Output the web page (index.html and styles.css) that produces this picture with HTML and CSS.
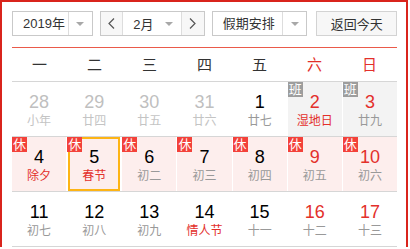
FILE: index.html
```html
<!DOCTYPE html>
<html lang="zh-CN">
<head>
    <meta charset="UTF-8">
    <title>万年历</title>
    <link rel="stylesheet" href="styles.css">
</head>
<body>

    <div class="calendar">
        <!-- 顶部控制栏 -->
        <div class="toolbar">
            <div class="select select-year">
                <span class="select-text">2019年</span>
                <span class="select-arrow"><i class="caret"></i></span>
            </div>

            <div class="month-group">
                <span class="nav-btn">
                    <svg width="7" height="11" viewBox="0 0 7 11"><polyline points="6,0.5 1,5.5 6,10.5" fill="none" stroke="#555" stroke-width="1.2"/></svg>
                </span>
                <span class="month-select">
                    <span class="month-text">2月</span>
                    <i class="caret"></i>
                </span>
                <span class="nav-btn nav-next">
                    <svg width="7" height="11" viewBox="0 0 7 11"><polyline points="1,0.5 6,5.5 1,10.5" fill="none" stroke="#555" stroke-width="1.2"/></svg>
                </span>
            </div>

            <div class="select select-holiday">
                <span class="select-text">假期安排</span>
                <span class="select-arrow"><i class="caret"></i></span>
            </div>

            <button class="btn-today">返回今天</button>
        </div>

        <!-- 星期 -->
        <div class="week-head">
            <span>一</span><span>二</span><span>三</span><span>四</span><span>五</span>
            <span class="red">六</span><span class="red">日</span>
        </div>

        <!-- 日期 -->
        <div class="days">
            <div class="week-row">
                <div class="day other"><p class="num">28</p><p class="lunar">小年</p></div>
                <div class="day other"><p class="num">29</p><p class="lunar">廿四</p></div>
                <div class="day other"><p class="num">30</p><p class="lunar">廿五</p></div>
                <div class="day other"><p class="num">31</p><p class="lunar">廿六</p></div>
                <div class="day"><p class="num">1</p><p class="lunar">廿七</p></div>
                <div class="day work"><span class="tag tag-work">班</span><p class="num red">2</p><p class="lunar red">湿地日</p></div>
                <div class="day work"><span class="tag tag-work">班</span><p class="num red">3</p><p class="lunar">廿九</p></div>
            </div>

            <div class="week-row">
                <div class="day rest"><span class="tag">休</span><p class="num">4</p><p class="lunar red">除夕</p></div>
                <div class="day rest selected"><span class="tag">休</span><p class="num">5</p><p class="lunar red">春节</p></div>
                <div class="day rest"><span class="tag">休</span><p class="num">6</p><p class="lunar">初二</p></div>
                <div class="day rest"><span class="tag">休</span><p class="num">7</p><p class="lunar">初三</p></div>
                <div class="day rest"><span class="tag">休</span><p class="num">8</p><p class="lunar">初四</p></div>
                <div class="day rest"><span class="tag">休</span><p class="num red">9</p><p class="lunar">初五</p></div>
                <div class="day rest"><span class="tag">休</span><p class="num red">10</p><p class="lunar">初六</p></div>
            </div>

            <div class="week-row">
                <div class="day"><p class="num">11</p><p class="lunar">初七</p></div>
                <div class="day"><p class="num">12</p><p class="lunar">初八</p></div>
                <div class="day"><p class="num">13</p><p class="lunar">初九</p></div>
                <div class="day"><p class="num">14</p><p class="lunar red">情人节</p></div>
                <div class="day"><p class="num">15</p><p class="lunar">十一</p></div>
                <div class="day"><p class="num red">16</p><p class="lunar">十二</p></div>
                <div class="day"><p class="num red">17</p><p class="lunar">十三</p></div>
            </div>
        </div>
    </div>

</body>
</html>
```

FILE: styles.css
```css
body {
    margin: 0;
    background-color: #fff;
    font-family: "Liberation Sans", "Noto Sans CJK SC", sans-serif;
    color: #333;
}

.calendar {
    width: 408px;
    box-sizing: border-box;
    border: 2px solid #d9241c;
    border-bottom: none;
    padding: 9px 9px 0 10px;
}

/* 顶部控制栏 */
.toolbar {
    display: flex;
    height: 25px;
    font-size: 13px;
}

.select {
    display: flex;
    border: 1px solid #c9c9c9;
    background-color: #fff;
}

.select-year {
    width: 80px;
    margin-right: 7px;
}

.select-holiday {
    width: 95px;
    margin-right: 9px;
}

.select-text {
    flex: 1;
    line-height: 23px;
    padding-left: 10px;
    border-right: 1px solid #ddd;
}

.select-arrow {
    width: 23px;
    display: flex;
    align-items: center;
    justify-content: center;
}

.caret {
    display: inline-block;
    width: 0;
    height: 0;
    border-left: 4px solid transparent;
    border-right: 4px solid transparent;
    border-top: 4px solid #a8a8a8;
}

.month-group {
    display: flex;
    width: 105px;
    margin-right: 7px;
    border: 1px solid #c9c9c9;
    box-sizing: border-box;
}

.nav-btn {
    width: 22px;
    display: flex;
    align-items: center;
    justify-content: center;
    background-color: #f7f7f7;
}

.month-select {
    width: 59px;
    display: flex;
    align-items: center;
    border-left: 1px solid #ddd;
    border-right: 1px solid #ddd;
    background-color: #fff;
}

.month-text {
    flex: 1;
    padding-left: 10px;
}

.month-select .caret {
    margin-right: 8px;
}

.btn-today {
    width: 82px;
    height: 25px;
    padding: 0;
    border: 1px solid #d3d3d3;
    background-color: #f7f7f7;
    font-family: inherit;
    font-size: 13px;
    color: #333;
}

/* 星期 */
.week-head {
    display: grid;
    grid-template-columns: repeat(7, 1fr);
    margin-top: 11px;
    border-top: 1px solid #ea5a4a;
    height: 33px;
    line-height: 33px;
    text-align: center;
    font-size: 15px;
}

/* 日期格子 */
.days {
    border-bottom: 1px solid #d6d6d6;
}

.week-row {
    display: grid;
    grid-template-columns: repeat(7, 1fr);
    column-gap: 1px;
    border-top: 1px solid #d6d6d6;
}

.day {
    position: relative;
    height: 54px;
    box-sizing: border-box;
    padding-top: 10px;
    text-align: center;
}

.day p {
    margin: 0;
}

.num {
    font-size: 18px;
    line-height: 20px;
    color: #000;
}

.lunar {
    margin-top: 1px !important;
    font-size: 12px;
    line-height: 16px;
    color: #999;
}

.other .num {
    color: #bfbfbf;
}

.other .lunar {
    color: #c4c4c4;
}

.rest {
    background-color: #fdeeed;
}

.work {
    background-color: #f3f3f3;
}

.selected {
    box-shadow: inset 0 0 0 2px #fdb415;
    margin-left: 1px;
    width: calc(100% - 2px);
}

.tag {
    position: absolute;
    top: 0;
    left: 0;
    width: 15px;
    height: 15px;
    line-height: 15px;
    font-size: 13px;
    text-align: center;
    color: #fff;
    background-color: #f3413a;
}

.selected .tag {
    left: -1px;
}

.tag-work {
    background-color: #9d9d9d;
}

.red,
.num.red,
.lunar.red {
    color: #e3302b;
}
```
